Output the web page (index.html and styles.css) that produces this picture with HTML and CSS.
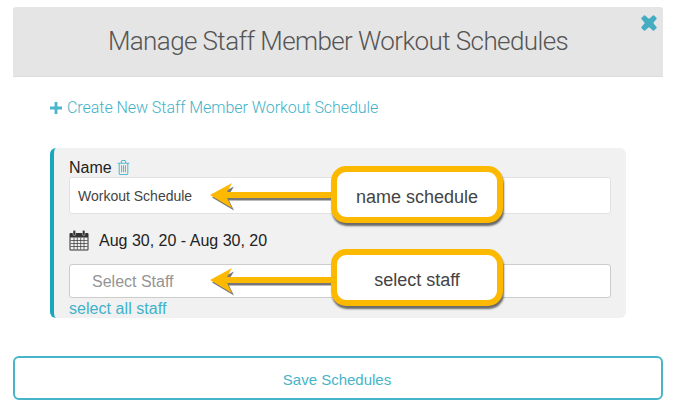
FILE: index.html
```html
<!DOCTYPE html>
<html lang="en">
<head>
<meta charset="utf-8">
<title>Manage Staff Member Workout Schedules</title>
<link rel="stylesheet" href="styles.css">
</head>
<body>
<div class="modal">
  <header class="modal-header">
    <h1 class="modal-title">Manage Staff Member Workout Schedules</h1>
    <svg class="close-icon" viewBox="0 0 16 16" aria-label="Close"><path d="M3.400 0.800 L8 4.600 L12.600 0.800 L15.200 3.400 L11.400 8 L15.200 12.600 L12.600 15.200 L8 11.400 L3.400 15.200 L0.800 12.600 L4.600 8 L0.800 3.400 Z" fill="#44adc2" stroke="#44adc2" stroke-width="1.200" stroke-linejoin="round"/></svg>
  </header>
  <a class="create-link"><svg class="plus-icon" viewBox="0 0 12 12"><path d="M4.600 0h2.800v4.600H12v2.800H7.400V12H4.600V7.400H0V4.600h4.600z" fill="#4ab7cd"/></svg>Create New Staff Member Workout Schedule</a>
  <section class="panel">
    <div class="name-label">Name
      <svg class="trash-icon" viewBox="0 0 12 14" fill="none" stroke="#4fbcd4" stroke-width="1"><path d="M0.500 3h11M2 3v9.500a1 1 0 0 0 1 1h6a1 1 0 0 0 1-1V3M4 3V1.500a1 1 0 0 1 1-1h2a1 1 0 0 1 1 1V3M4.200 5v6.500M6 5v6.500M7.800 5v6.500"/></svg>
    </div>
    <div class="field field-name">Workout Schedule</div>
    <div class="date-row">
      <svg class="calendar-icon" viewBox="0 0 20 21"><path d="M1.500 3h17a1 1 0 0 1 1 1v15.500a1 1 0 0 1-1 1h-17a1 1 0 0 1-1-1V4a1 1 0 0 1 1-1z" fill="#333"/><path d="M1.500 7.500h17v12H1.500z" fill="#f1f1f1"/><path d="M1.500 10.500h17M1.500 13.500h17M1.500 16.500h17M5 7.500v12M8.300 7.500v12M11.700 7.500v12M15 7.500v12" stroke="#333" stroke-width="0.700"/><rect x="4" y="0.300" width="2.600" height="5.200" rx="1.300" fill="#333" stroke="#f1f1f1" stroke-width="0.500"/><rect x="13.400" y="0.300" width="2.600" height="5.200" rx="1.300" fill="#333" stroke="#f1f1f1" stroke-width="0.500"/></svg>
      <span>Aug 30, 20 - Aug 30, 20</span>
    </div>
    <div class="field field-staff">Select Staff</div>
    <a class="select-all">select all staff</a>
  </section>
  <button class="save-btn" type="button">Save Schedules</button>
</div>

<svg class="arrow arrow-name" viewBox="0 0 125 30"><path d="M2 14 L24 3 L19 11 H125 V17 H19 L24 27 Z" fill="#555" opacity=".8" transform="translate(1 1.500)"/><path d="M1 13 L23 1 L18 10 H125 V16 H18 L23 26 Z" fill="#fdb900"/></svg>
<svg class="arrow arrow-staff" viewBox="0 0 125 30"><path d="M2 14 L24 3 L19 11 H125 V17 H19 L24 27 Z" fill="#555" opacity=".8" transform="translate(1 1.500)"/><path d="M1 13 L23 1 L18 10 H125 V16 H18 L23 26 Z" fill="#fdb900"/></svg>
<div class="callout callout-name">name schedule</div>
<div class="callout callout-staff">select staff</div>
</body>
</html>
```
FILE: styles.css
```css
* { box-sizing: border-box; }
html, body { margin: 0; padding: 0; background: #fff; }
body {
  position: relative;
  width: 676px;
  height: 416px;
  overflow: hidden;
  font-family: "Liberation Sans", Arial, sans-serif;
  color: #222;
}
.modal {
  display: flex;
  flex-direction: column;
  padding: 7px 13px 0;
}
.modal-header {
  position: relative;
  display: flex;
  align-items: center;
  justify-content: center;
  height: 70px;
  padding-bottom: 2px;
  background: #e5e5e5;
  border-bottom: 1px solid #dcdcdc;
  border-radius: 3px 3px 0 0;
}
.modal-title {
  margin: 0;
  font-family: Roboto, "Liberation Sans", sans-serif;
  font-weight: 300;
  font-size: 26px;
  letter-spacing: -0.6px;
  color: #555;
}
.close-icon {
  position: absolute;
  top: 8px;
  right: 6px;
  width: 16px;
  height: 16px;
}
.create-link {
  display: flex;
  align-items: center;
  gap: 5px;
  margin: 21px 0 0 37px;
  height: 19px;
  font-family: Roboto, "Liberation Sans", sans-serif;
  font-weight: 300;
  font-size: 16px;
  letter-spacing: -0.05px;
  color: #3fb2c9;
}
.plus-icon { width: 12px; height: 12px; }
.panel {
  display: flex;
  flex-direction: column;
  width: 576px;
  height: 170px;
  margin: 31px 0 0 37px;
  padding: 9px 15px 0;
  background: #f1f1f1;
  border-left: 4px solid #1ba6bc;
  border-radius: 6px;
}
.name-label {
  display: flex;
  align-items: center;
  gap: 5px;
  height: 20px;
  padding-top: 1px;
  font-size: 16px;
  color: #222;
}
.trash-icon { width: 13px; height: 15px; }
.field {
  width: 542px;
  background: #fff;
  border-radius: 3px;
  display: flex;
  align-items: center;
}
.field-name {
  height: 37px;
  border: 1px solid #e2e2e2;
  padding-left: 8px;
  font-size: 14px;
  color: #444;
}
.date-row {
  display: flex;
  align-items: center;
  gap: 10px;
  height: 21px;
  margin-top: 16px;
  font-size: 16px;
  color: #222;
}
.calendar-icon { width: 20px; height: 21px; }
.field-staff {
  height: 34px;
  margin-top: 13px;
  border: 1px solid #ccc;
  padding: 2px 0 0 22px;
  font-size: 16px;
  color: #949494;
}
.select-all {
  margin-top: 2px;
  font-size: 16px;
  letter-spacing: 0.05px;
  color: #3fb2c9;
}
.save-btn {
  height: 44px;
  margin-top: 38px;
  padding: 3px 2px 0 0;
  background: #fff;
  border: 2px solid #47b4ca;
  border-radius: 6px;
  font-family: "Liberation Sans", Arial, sans-serif;
  font-size: 15px;
  color: #47b4ca;
}
.arrow {
  position: absolute;
  left: 209px;
  width: 125px;
  height: 30px;
}
.arrow-name { top: 182px; }
.arrow-staff { top: 267px; }
.callout {
  position: absolute;
  left: 331px;
  width: 172px;
  height: 57px;
  padding-top: 5px;
  display: flex;
  align-items: center;
  justify-content: center;
  background: #fff;
  border: 6px solid #fdb900;
  border-radius: 15px;
  box-shadow: 1px 3px 2px rgba(60, 60, 60, .75);
  font-size: 18px;
  color: #444;
}
.callout-name { top: 166px; }
.callout-staff { top: 249px; }
```
